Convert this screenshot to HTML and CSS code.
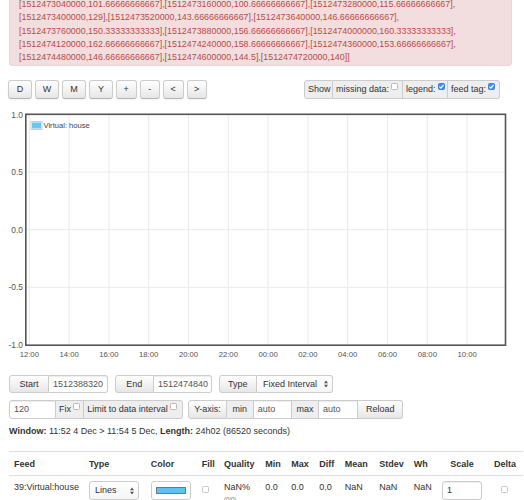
FILE: index.html
```html
<!DOCTYPE html>
<html>
<head>
<meta charset="utf-8">
<link rel="stylesheet" href="styles.css">
</head>
<body>
<div class="alert">[1512473040000,101.66666666667],[1512473160000,100.66666666667],[1512473280000,115.66666666667],<br>[1512473400000,129],[1512473520000,143.66666666667],[1512473640000,146.66666666667],<br>[1512473760000,150.33333333333],[1512473880000,156.66666666667],[1512474000000,160.33333333333],<br>[1512474120000,162.66666666667],[1512474240000,158.66666666667],[1512474360000,153.66666666667],<br>[1512474480000,146.66666666667],[1512474600000,144.5],[1512474720000,140]]</div>

<div class="toolbar">
  <div class="btn-row">
    <span class="btn btn-wide">D</span>
    <span class="btn btn-wide">W</span>
    <span class="btn btn-wide">M</span>
    <span class="btn btn-wide">Y</span>
    <span class="btn btn-narrow">+</span>
    <span class="btn btn-narrow">-</span>
    <span class="btn btn-narrow">&lt;</span>
    <span class="btn btn-narrow">&gt;</span>
  </div>
  <div class="group show-group">
    <span class="addon w-show">Show</span>
    <span class="addon w-missing">missing data:<span class="cb raised"></span></span>
    <span class="addon w-legend">legend:<span class="cb raised checked"><svg viewBox="0 0 8 8" width="7" height="7"><path d="M1.6 4.2 L3.3 5.8 L6.4 2.2" stroke="#fff" stroke-width="1.4" fill="none"/></svg></span></span>
    <span class="addon w-feedtag">feed tag:<span class="cb raised checked"><svg viewBox="0 0 8 8" width="7" height="7"><path d="M1.6 4.2 L3.3 5.8 L6.4 2.2" stroke="#fff" stroke-width="1.4" fill="none"/></svg></span></span>
  </div>
</div>

<svg class="chart" viewBox="0 106 524 256" width="524" height="256">
  <g stroke="#ebebeb" stroke-width="1">
    <line x1="29.3" y1="115" x2="29.3" y2="344"/>
    <line x1="69.1" y1="115" x2="69.1" y2="344"/>
    <line x1="108.9" y1="115" x2="108.9" y2="344"/>
    <line x1="148.7" y1="115" x2="148.7" y2="344"/>
    <line x1="188.5" y1="115" x2="188.5" y2="344"/>
    <line x1="228.3" y1="115" x2="228.3" y2="344"/>
    <line x1="268.1" y1="115" x2="268.1" y2="344"/>
    <line x1="307.9" y1="115" x2="307.9" y2="344"/>
    <line x1="347.7" y1="115" x2="347.7" y2="344"/>
    <line x1="387.5" y1="115" x2="387.5" y2="344"/>
    <line x1="427.3" y1="115" x2="427.3" y2="344"/>
    <line x1="467.1" y1="115" x2="467.1" y2="344"/>
    <line x1="27" y1="172.1" x2="505" y2="172.1"/>
    <line x1="27" y1="229.7" x2="505" y2="229.7"/>
    <line x1="27" y1="287.3" x2="505" y2="287.3"/>
  </g>
  <rect x="25.8" y="114.3" width="479.7" height="230.9" fill="none" stroke="#555" stroke-width="1.6"/>
  <g class="ticks yticks" text-anchor="end">
    <text x="23" y="118">1.0</text>
    <text x="23" y="175.1">0.5</text>
    <text x="23" y="232.7">0.0</text>
    <text x="23" y="290.3">-0.5</text>
    <text x="23" y="348">-1.0</text>
  </g>
  <g class="ticks xticks" text-anchor="middle">
    <text x="29.3" y="356.8">12:00</text>
    <text x="69.1" y="356.8">14:00</text>
    <text x="108.9" y="356.8">16:00</text>
    <text x="148.7" y="356.8">18:00</text>
    <text x="188.5" y="356.8">20:00</text>
    <text x="228.3" y="356.8">22:00</text>
    <text x="268.1" y="356.8">00:00</text>
    <text x="307.9" y="356.8">02:00</text>
    <text x="347.7" y="356.8">04:00</text>
    <text x="387.5" y="356.8">06:00</text>
    <text x="427.3" y="356.8">08:00</text>
    <text x="467.1" y="356.8">10:00</text>
  </g>
  <rect x="31" y="121.5" width="11" height="8" fill="#fff" stroke="#ccc" stroke-width="1"/>
  <rect x="32" y="122.5" width="9" height="6" fill="#66c6f5"/>
  <text class="ticks legend" x="43.5" y="127.8">Virtual: house</text>
</svg>

<div class="controls row1">
  <div class="group">
    <span class="gbtn w40">Start</span>
    <span class="input w59">1512388320</span>
  </div>
  <div class="group">
    <span class="gbtn w39">End</span>
    <span class="input w58">1512474840</span>
  </div>
  <div class="group">
    <span class="gbtn w38">Type</span>
    <span class="select w76">Fixed Interval<svg class="updown" viewBox="0 0 4 8" width="4" height="8"><path d="M0 3.2 L2 0.6 L4 3.2Z M0 4.8 L2 7.4 L4 4.8Z" fill="#555"/></svg></span>
  </div>
</div>

<div class="controls row2">
  <div class="group">
    <span class="input w47">120</span>
    <span class="addon w28">Fix<span class="cb raised"></span></span>
    <span class="addon w98">Limit to data interval<span class="cb raised"></span></span>
  </div>
  <div class="group">
    <span class="gbtn w38 center">Y-axis:</span>
    <span class="addon w27 center">min</span>
    <span class="input w38">auto</span>
    <span class="addon w27 center">max</span>
    <span class="input w39">auto</span>
    <span class="gbtn w45 center">Reload</span>
  </div>
</div>

<div class="window"><b>Window:</b> 11:52 4 Dec &gt; 11:54 5 Dec, <b>Length:</b> 24h02 (86520 seconds)</div>

<table class="feeds">
  <colgroup>
    <col class="c-feed"><col class="c-type"><col class="c-color"><col class="c-fill"><col class="c-quality"><col class="c-min"><col class="c-max"><col class="c-diff"><col class="c-mean"><col class="c-stdev"><col class="c-wh"><col class="c-scale"><col class="c-delta">
  </colgroup>
  <thead>
    <tr><th>Feed</th><th>Type</th><th>Color</th><th>Fill</th><th>Quality</th><th>Min</th><th>Max</th><th>Diff</th><th>Mean</th><th>Stdev</th><th>Wh</th><th class="center">Scale</th><th class="center">Delta</th></tr>
  </thead>
  <tbody>
    <tr>
      <td>39:Virtual:house</td>
      <td><span class="select sel-lines">Lines<svg class="updown" viewBox="0 0 4 8" width="4" height="8"><path d="M0 3.2 L2 0.6 L4 3.2Z M0 4.8 L2 7.4 L4 4.8Z" fill="#555"/></svg></span></td>
      <td><span class="colorbox"><span class="swatch"></span></span></td>
      <td><span class="cb cb-cell"></span></td>
      <td class="quality">NaN%<br><span class="sub">(0/0)</span></td>
      <td>0.0</td>
      <td>0.0</td>
      <td>0.0</td>
      <td>NaN</td>
      <td>NaN</td>
      <td>NaN</td>
      <td class="center"><span class="input scale-in">1</span></td>
      <td class="center"><span class="cb cb-cell"></span></td>
    </tr>
  </tbody>
</table>
</body>
</html>
```

FILE: styles.css
```css
* { box-sizing: border-box; }

body {
  margin: 0;
  font-family: "Liberation Sans", Arial, Helvetica, sans-serif;
  font-size: 9px;
  line-height: 13px;
  color: #333;
  background: #fff;
  overflow: hidden;
}

.alert {
  margin: -10px 12px 0 9px;
  padding: 7px 9px 1px;
  background: #f2dede;
  border: 1px solid #eed3d7;
  border-radius: 3px;
  color: #b94a48;
  font-size: 8.9px;
  line-height: 13.3px;
  white-space: nowrap;
}

.toolbar {
  display: flex;
  justify-content: space-between;
  margin: 13.5px 24px 0 8px;
  height: 19px;
}

.btn-row { display: flex; gap: 3px; }

.btn {
  height: 19px;
  display: flex;
  align-items: center;
  justify-content: center;
  background: linear-gradient(#fff, #e6e6e6);
  border: 1px solid #ccc;
  border-bottom-color: #b3b3b3;
  border-radius: 3px;
  color: #333;
  box-shadow: 0 1px 2px rgba(0,0,0,.05);
}
.btn-wide { width: 24px; }
.btn-narrow { width: 20.5px; }

.group { display: flex; height: 18.5px; }
.show-group { height: 19px; }

.group > * {
  display: flex;
  align-items: center;
  border: 1px solid #ccc;
  border-left: none;
  height: 100%;
  white-space: nowrap;
}
.group > :first-child { border-left: 1px solid #ccc; border-radius: 3px 0 0 3px; }
.group > :last-child { border-radius: 0 3px 3px 0; }

.addon { background: #eee; padding: 0 3px; gap: 2px; }
.gbtn {
  background: linear-gradient(#fff, #e6e6e6);
  justify-content: center;
  color: #333;
}
.input {
  background: #fff;
  padding: 0 4px;
  color: #555;
  box-shadow: inset 0 1px 1px rgba(0,0,0,.075);
}
.select {
  background: linear-gradient(#fff, #f5f5f5);
  padding: 0 4px 0 6px;
  justify-content: space-between;
  color: #333;
}
.center { justify-content: center; text-align: center; }

.w-show { width: 29px; }
.w-missing { width: 70px; }
.w-legend { width: 45px; }
.w-feedtag { width: 52px; }
.w27 { width: 27px; }
.w28 { width: 28.3px; }
.w38 { width: 38.4px; }
.w39 { width: 39.3px; }
.w40 { width: 40px; }
.w45 { width: 45px; }
.w47 { width: 47px; }
.w58 { width: 58.4px; }
.w59 { width: 59.3px; }
.w76 { width: 75.7px; }
.w98 { width: 98.4px; }

.cb {
  display: inline-block;
  width: 7px;
  height: 7px;
  background: #fff;
  border: 1px solid #b8b8b8;
  border-radius: 1.5px;
  flex: none;
}
.cb.raised { margin-top: -6px; }
.cb.checked {
  background: #3d8ef6;
  border-color: #3a80e0;
  position: relative;
}
.cb.checked svg { position: absolute; left: -1px; top: -1px; }

.chart { display: block; margin-top: 7px; }
.ticks { font-family: "Liberation Sans", Arial, sans-serif; font-size: 8px; fill: #545454; }
.yticks { font-size: 8.4px; }
.xticks { font-size: 7.7px; }
.legend { font-size: 7.6px; fill: #444; }

.controls { display: flex; margin-left: 9px; }
.row1 { margin-top: 13px; gap: 6.3px; }
.row2 { margin-top: 7px; gap: 5.6px; }

.window { margin: 6.5px 0 0 9px; }

.feeds {
  margin: 12.5px 0 0 9px;
  width: 514px;
  table-layout: fixed;
  border-collapse: collapse;
}
.c-feed { width: 75px; }
.c-type { width: 61.7px; }
.c-color { width: 51px; }
.c-fill { width: 22.3px; }
.c-quality { width: 41.3px; }
.c-min { width: 26px; }
.c-max { width: 28px; }
.c-diff { width: 25.4px; }
.c-mean { width: 34.6px; }
.c-stdev { width: 34.4px; }
.c-wh { width: 28.3px; }
.c-scale { width: 50px; }
.c-delta { width: 36px; }

.feeds th {
  text-align: left;
  font-weight: bold;
  padding: 6px 5px 4px;
  border-top: 1px solid #ddd;
  white-space: nowrap;
}
.feeds th.center, .feeds td.center { text-align: center; }
.feeds td {
  padding: 5.5px 5px 4px;
  border-top: 1px solid #ddd;
  vertical-align: top;
  white-space: nowrap;
}
.feeds td.quality { line-height: 11px; padding-top: 6px; }
.sub { font-size: 6px; line-height: 6px; color: #777; }

.sel-lines {
  display: flex;
  align-items: center;
  width: 50.3px;
  height: 19px;
  border: 1px solid #ccc;
  border-radius: 3px;
  padding: 0 4px 0 5px;
}
.colorbox {
  display: block;
  width: 40px;
  height: 19px;
  border: 1px solid #ccc;
  border-radius: 3px;
  background: #fff;
  padding: 5px 4px 0;
}
.swatch {
  display: block;
  height: 6.5px;
  background: #5fc2f4;
  border: 1px solid #777;
}
.cb-cell { margin-top: 5px; border-color: #c8c8c8; }
.scale-in {
  display: flex;
  align-items: center;
  width: 40px;
  height: 19px;
  margin: 0 auto;
  border: 1px solid #ccc;
  border-radius: 3px;
  color: #333;
}
```
